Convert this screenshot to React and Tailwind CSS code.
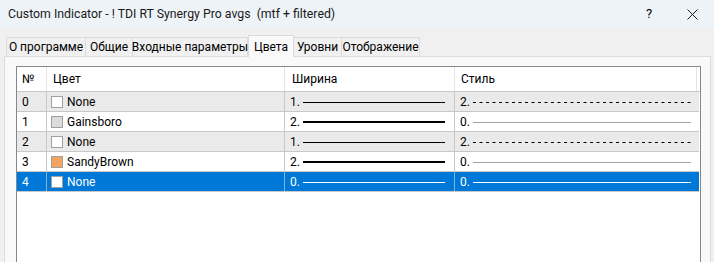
import React from 'react';

const rows = [
  { n: 0, swatch: '#ffffff', name: 'None', width: 1, style: 2 },
  { n: 1, swatch: '#dcdcdc', name: 'Gainsboro', width: 2, style: 0 },
  { n: 2, swatch: '#ffffff', name: 'None', width: 1, style: 2 },
  { n: 3, swatch: '#f4a460', name: 'SandyBrown', width: 2, style: 0 },
  { n: 4, swatch: '#ffffff', name: 'None', width: 0, style: 0, selected: true },
];

const tabs = [
  { label: 'О программе', w: 'w-[80px]' },
  { label: 'Общие', w: 'w-[47px]' },
  { label: 'Входные параметры', w: 'w-[115px]' },
  { label: 'Цвета', w: 'w-[46px]', active: true },
  { label: 'Уровни', w: 'w-[48px]' },
  { label: 'Отображение', w: 'w-[78px]' },
];

const WidthLine = ({ width, selected }) => (
  <svg width="142" height="6" className="block">
    <line
      x1="0"
      y1={width === 2 ? 3 : 3.5}
      x2="142"
      y2={width === 2 ? 3 : 3.5}
      stroke={selected ? '#ffffff' : '#000000'}
      strokeWidth={width === 2 ? 2 : 1}
    />
  </svg>
);

const StyleLine = ({ style, selected }) => (
  <svg width="218" height="6" className="block">
    <line
      x1="0"
      y1="3.5"
      x2="218"
      y2="3.5"
      stroke={selected ? '#ffffff' : style === 2 ? '#000000' : '#a0a0a0'}
      strokeWidth="1"
      strokeDasharray={style === 2 ? '3 3.5' : undefined}
    />
  </svg>
);

export default function App() {
  return (
    <div
      className="w-[714px] h-[262px] overflow-hidden bg-[#f0f0f0] text-[12px] text-black whitespace-nowrap"
      style={{ fontFamily: 'Roboto, "Noto Sans", Arial, sans-serif' }}
    >
      {/* title bar */}
      <div className="h-[28px] bg-[#eef3f8] flex items-center pl-[8px]">
        <span className="text-[12.3px] text-[#1a1a1a] flex-1">
          Custom Indicator - ! TDI RT Synergy Pro avgs&nbsp; (mtf + filtered)
        </span>
        <span className="w-[10px] text-center text-[13px] mr-[33px]">?</span>
        <svg width="11" height="11" viewBox="0 0 11 11" className="mr-[16px]">
          <path d="M0.5 0.5 L10.5 10.5 M10.5 0.5 L0.5 10.5" stroke="#1a1a1a" strokeWidth="1" />
        </svg>
      </div>

      {/* tabs */}
      <div className="flex items-end h-[28px] pl-[6px]">
        {tabs.map((t) =>
          t.active ? (
            <div
              key={t.label}
              className={`${t.w} h-[22px] -mb-px relative z-10 bg-[#f9f9f9] border border-b-0 border-[#dcdcdc] flex items-center justify-center`}
            >
              {t.label}
            </div>
          ) : (
            <div
              key={t.label}
              className={`${t.w} h-[19px] bg-[#f0f0f0] border border-b-0 border-l-0 first:border-l border-[#dcdcdc] flex items-center justify-center`}
            >
              {t.label}
            </div>
          )
        )}
      </div>

      {/* panel */}
      <div className="ml-[4px] w-[707px] h-[220px] bg-[#f9f9f9] border border-[#dcdcdc] pt-[9px] pl-[11px]">
        <div className="w-[685px] h-[220px] bg-white border border-[#828790]">
          {/* header */}
          <div className="flex h-[25px] items-center border-b border-[#c8c8c8]">
            <div className="w-[30px] h-full flex items-center pl-[5px] border-r border-[#e5e5e5]">№</div>
            <div className="w-[238px] h-full flex items-center pl-[6px] border-r border-[#e5e5e5]">Цвет</div>
            <div className="w-[170px] h-full flex items-center pl-[7px] border-r border-[#e5e5e5]">Ширина</div>
            <div className="w-[242px] h-full flex items-center pl-[6px] border-r border-[#e5e5e5]">Стиль</div>
          </div>
          {rows.map((r) => {
            const bg = r.selected ? 'bg-[#0078d7] text-white' : r.n % 2 === 0 ? 'bg-[#eaeaea]' : 'bg-white';
            const sep = r.selected ? 'border-[#7fb4e6]' : 'border-[#c8c8c8]';
            return (
              <div key={r.n} className={`flex h-[20px] w-[682px] border-b border-[#c8c8c8] ${bg}`}>
                <div className={`w-[30px] h-full flex items-center pl-[5px] border-r ${sep}`}>{r.n}</div>
                <div className={`w-[238px] h-full flex items-center pl-[4px] border-r ${sep}`}>
                  <span
                    className="w-[12px] h-[12px] border border-[#a0a0a0] mr-[4px] shrink-0"
                    style={{ backgroundColor: r.swatch }}
                  />
                  {r.name}
                </div>
                <div className={`w-[170px] h-full flex items-center pl-[5px] border-r ${sep}`}>
                  <span className="w-[13px]">{r.width}.</span>
                  <WidthLine width={r.width} selected={r.selected} />
                </div>
                <div className="w-[242px] h-full flex items-center pl-[5px]">
                  <span className="w-[13px]">{r.style}.</span>
                  <StyleLine style={r.style} selected={r.selected} />
                </div>
              </div>
            );
          })}
        </div>
      </div>
    </div>
  );
}
